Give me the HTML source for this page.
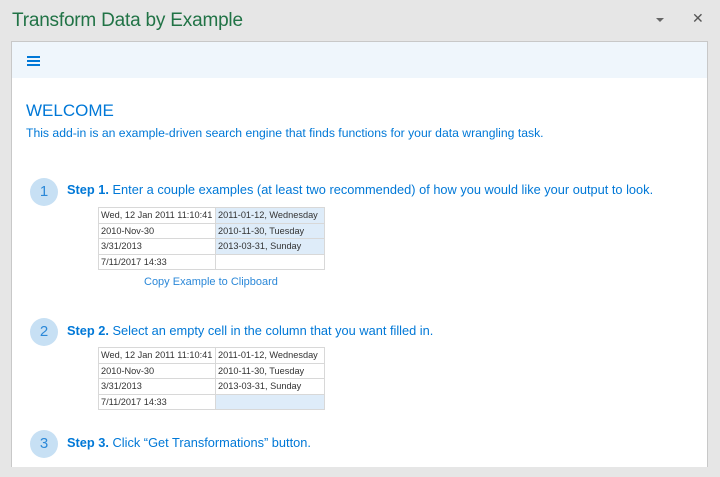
<!DOCTYPE html>
<html><head><style>
*{margin:0;padding:0;box-sizing:border-box}
body{width:720px;height:477px;background:#e6e6e6;font-family:"Liberation Sans",sans-serif;position:relative;overflow:hidden}
.title{position:absolute;left:12px;top:10px;font-size:19px;color:#217346;letter-spacing:-0.2px}
.panel{position:absolute;left:11px;top:41px;width:697px;height:426px;background:#fff;border:1px solid #c8c8c8;border-bottom:none}
.hdr{height:36px;background:#eff6fc;position:relative}
.ham{position:absolute;left:15px;top:14px;width:13px}
.ham i{display:block;height:2px;background:#0078d7;margin-bottom:2px}
.a{position:absolute;color:#0078d7;white-space:nowrap}
.circ{position:absolute;left:18px;width:28px;height:28px;border-radius:50%;background:#c7e0f4;color:#2b88d8;text-align:center;line-height:28px;font-size:15px}
.step{position:absolute;left:55px;font-size:12.8px;color:#0078d7;white-space:nowrap}
table{position:absolute;left:86px;border-collapse:collapse;font-size:9.2px;color:#333;table-layout:fixed;width:226px}
td{border:1px solid #d8d8d8;height:15.5px;padding:0 1px 0 2px;white-space:nowrap;overflow:hidden}
td.l{width:117px}td.r{width:109px}
td.b{background:#deecf9}
</style></head><body>
<div class="title">Transform Data by Example</div>
<div style="position:absolute;left:656px;top:18px;border-left:4px solid transparent;border-right:4px solid transparent;border-top:4px solid #666"></div>
<div style="position:absolute;left:692px;top:10px;font-size:14px;color:#555">✕</div>
<div class="panel">
<div class="hdr"><div class="ham"><i></i><i></i><i></i></div></div>
<div class="a" style="left:14px;top:59px;font-size:17px">WELCOME</div>
<div class="a" style="left:14px;top:84px;font-size:12.2px">This add-in is an example-driven search engine that finds functions for your data wrangling task.</div>
<div class="circ" style="top:136px">1</div>
<div class="step" style="top:140px"><b>Step 1.</b> Enter a couple examples (at least two recommended) of how you would like your output to look.</div>
<table style="top:165px"><tr><td class="l">Wed, 12 Jan 2011 11:10:41</td><td class="r b">2011-01-12, Wednesday</td></tr><tr><td>2010-Nov-30</td><td class="b">2010-11-30, Tuesday</td></tr><tr><td>3/31/2013</td><td class="b">2013-03-31, Sunday</td></tr><tr><td>7/11/2017 14:33</td><td></td></tr></table>
<div class="a" style="left:132px;top:234px;font-size:11px;color:#2b88d8">Copy Example to Clipboard</div>
<div class="circ" style="top:276px">2</div>
<div class="step" style="top:281px"><b>Step 2.</b> Select an empty cell in the column that you want filled in.</div>
<table style="top:305px"><tr><td class="l">Wed, 12 Jan 2011 11:10:41</td><td class="r">2011-01-12, Wednesday</td></tr><tr><td>2010-Nov-30</td><td>2010-11-30, Tuesday</td></tr><tr><td>3/31/2013</td><td>2013-03-31, Sunday</td></tr><tr><td>7/11/2017 14:33</td><td class="b"></td></tr></table>
<div class="circ" style="top:388px">3</div>
<div class="step" style="top:393px"><b>Step 3.</b> Click “Get Transformations” button.</div>
</div>
</body></html>
